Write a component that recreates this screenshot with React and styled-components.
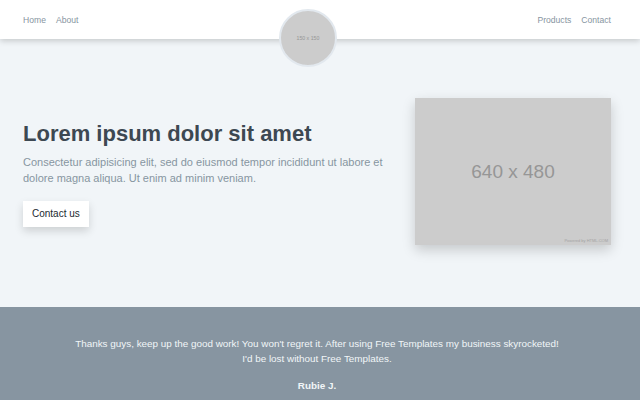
import React from "react";
import styled, { createGlobalStyle } from "styled-components";

const Global = createGlobalStyle`
  html, body { margin: 0; padding: 0; }
  body { font-family: "Liberation Sans", Arial, sans-serif; background: #f1f5f8; }
  * { box-sizing: border-box; }
`;

const Page = styled.div`
  width: 640px;
  height: 400px;
  display: flex;
  flex-direction: column;
  overflow: hidden;
  background: #f1f5f8;
`;

const Header = styled.header`
  position: relative;
  z-index: 2;
  height: 39px;
  background: #ffffff;
  box-shadow: 0 2px 6px rgba(0, 0, 0, 0.18);
  display: flex;
  align-items: flex-start;
  justify-content: space-between;
  padding: 0 29px 0 23px;
  flex-shrink: 0;
`;

const NavGroup = styled.nav`
  display: flex;
  gap: 10px;
  height: 39px;
  align-items: center;
`;

const NavLink = styled.a`
  font-size: 8.6px;
  color: #8795a1;
  text-decoration: none;
`;

const Logo = styled.div`
  margin-top: 9px;
  width: 58px;
  height: 58px;
  border-radius: 50%;
  background: #cccccc;
  border: 2px solid #e2e8ee;
  display: flex;
  align-items: center;
  justify-content: center;
  font-size: 5.2px;
  color: #969696;
`;

const Hero = styled.section`
  flex: 1;
  display: flex;
  align-items: center;
  padding: 0 29px 0 23px;
  gap: 16px;
`;

const HeroText = styled.div`
  flex: 1;
  display: flex;
  flex-direction: column;
  align-items: flex-start;
`;

const Title = styled.h1`
  margin: 0;
  font-size: 22px;
  font-weight: 700;
  color: #3d4852;
  line-height: 28px;
`;

const Lead = styled.p`
  margin: 6px 0 0;
  font-size: 11px;
  line-height: 16px;
  color: #8795a1;
`;

const Button = styled.button`
  margin-top: 15px;
  height: 26px;
  padding: 0 9px;
  border: none;
  background: #ffffff;
  color: #22292f;
  font-family: inherit;
  font-size: 10px;
  box-shadow: 0 4px 9px rgba(0, 0, 0, 0.15);
`;

const Placeholder = styled.div`
  position: relative;
  width: 196px;
  height: 147px;
  background: #cccccc;
  box-shadow: 0 5px 12px rgba(0, 0, 0, 0.18);
  display: flex;
  align-items: center;
  justify-content: center;
  font-size: 19px;
  color: #969696;
  flex-shrink: 0;
  margin-top: -3px;
`;

const Powered = styled.span`
  position: absolute;
  right: 3px;
  bottom: 2px;
  font-size: 4px;
  color: #a3a3a3;
`;

const Footer = styled.footer`
  height: 93px;
  flex-shrink: 0;
  background: #8795a1;
  color: #f1f5f8;
  text-align: center;
  padding: 29px 29px 0 23px;
  font-size: 9.9px;
  line-height: 15px;
`;

const Quote = styled.p`
  margin: 0;
`;

const Author = styled.p`
  margin: 12px 0 0;
  font-weight: 700;
`;

export default function App() {
  return (
    <>
      <Global />
      <Page>
        <Header>
          <NavGroup>
            <NavLink href="#">Home</NavLink>
            <NavLink href="#">About</NavLink>
          </NavGroup>
          <Logo>150 x 150</Logo>
          <NavGroup>
            <NavLink href="#">Products</NavLink>
            <NavLink href="#">Contact</NavLink>
          </NavGroup>
        </Header>
        <Hero>
          <HeroText>
            <Title>Lorem ipsum dolor sit amet</Title>
            <Lead>
              Consectetur adipisicing elit, sed do eiusmod tempor incididunt ut labore et dolore magna aliqua. Ut enim ad minim veniam.
            </Lead>
            <Button>Contact us</Button>
          </HeroText>
          <Placeholder>
            640 x 480
            <Powered>Powered by HTML.COM</Powered>
          </Placeholder>
        </Hero>
        <Footer>
          <Quote>
            Thanks guys, keep up the good work! You won't regret it. After using Free Templates my business skyrocketed!
            <br />
            I'd be lost without Free Templates.
          </Quote>
          <Author>Rubie J.</Author>
        </Footer>
      </Page>
    </>
  );
}
